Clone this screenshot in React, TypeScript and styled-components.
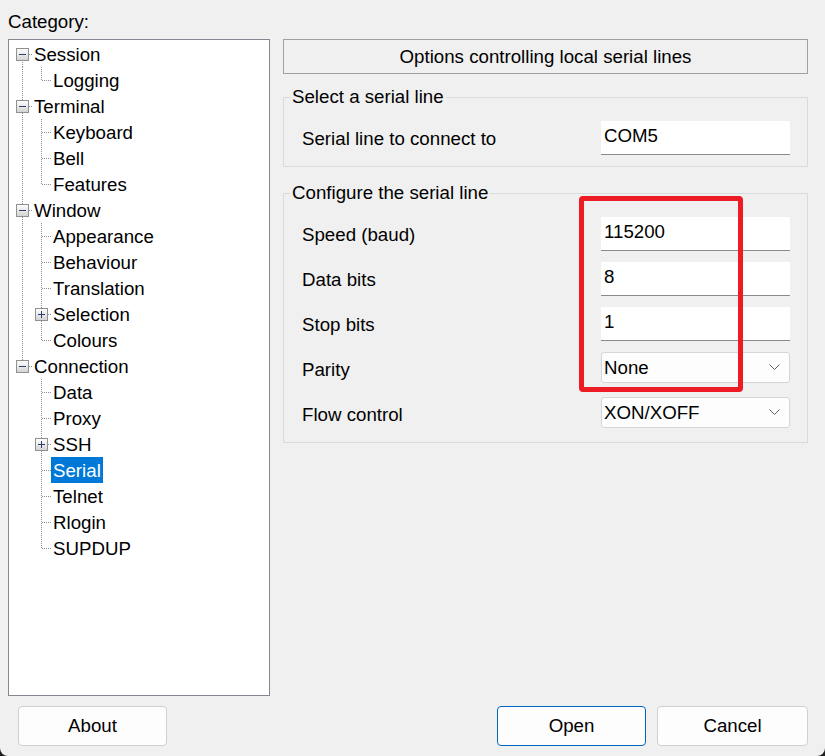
import React, { useId } from 'react';
import styled, { createGlobalStyle } from 'styled-components';

const Global = createGlobalStyle`
  html, body { margin: 0; padding: 0; background: #1f1f1f; }
  body { font-family: "Liberation Sans", Arial, sans-serif; }
`;

const Dialog = styled.div`
  position: relative;
  width: 825px;
  height: 756px;
  box-sizing: border-box;
  background: #f0f0f0;
  border-radius: 0 0 8px 8px;
  padding: 11px 17px 0 8px;
  display: flex;
  flex-direction: column;
  font-family: "Liberation Sans", Arial, sans-serif;
  font-size: 18.7px;
  color: #000;
`;

const CategoryLabel = styled.div`
  height: 21px;
  line-height: 21px;
  margin-bottom: 7px;
`;

const Main = styled.div`
  display: flex;
  gap: 13px;
  height: 657px;
`;

const TreeBox = styled.div`
  width: 262px;
  height: 657px;
  box-sizing: border-box;
  border: 1px solid #828790;
  background: #fff;
  padding: 1px 0 0 4px;
  display: flex;
  flex-direction: column;
`;

const TreeRow = styled.div`
  display: flex;
  height: 26px;
  align-items: stretch;
`;

const GuideSvg = styled.svg`
  display: block;
  flex: 0 0 19px;
  width: 19px;
  height: 26px;
`;

const NodeLabel = styled.span<{ $selected?: boolean }>`
  padding: 1px 2px 0;
  box-sizing: border-box;
  height: 26px;
  line-height: 25px;
  white-space: nowrap;
  background: ${(p) => (p.$selected ? '#0078d7' : 'transparent')};
  color: ${(p) => (p.$selected ? '#fff' : '#000')};
`;

const RightCol = styled.div`
  flex: 1;
  display: flex;
  flex-direction: column;
`;

const Header = styled.div`
  height: 35px;
  box-sizing: border-box;
  border: 1px solid #a0a0a0;
  padding-top: 1px;
  display: flex;
  align-items: center;
  justify-content: center;
`;

const Group = styled.fieldset<{ $gap: number }>`
  margin: ${(p) => p.$gap}px 0 0 0;
  padding: 0;
  border: 1px solid #dadada;
  min-width: 0;
`;

const Legend = styled.legend`
  margin-left: 6px;
  padding: 0 2px;
  line-height: 22px;
  height: 22px;
`;

const GroupBody = styled.div`
  padding: 13px 17px 11px 18px;
  display: flex;
  flex-direction: column;
  gap: 11px;
`;

const FieldRow = styled.div`
  display: grid;
  grid-template-columns: 1fr 189px;
  height: 34px;
  align-items: center;
`;

const FieldLabel = styled.span`
  padding-top: 1px;
`;

const TextBox = styled.div`
  height: 34px;
  box-sizing: border-box;
  background: #fff;
  border-bottom: 1px solid #8a8a8a;
  padding: 4px 4px 0 3px;
  line-height: 21px;
`;

const Combo = styled.div`
  align-self: start;
  height: 31px;
  box-sizing: border-box;
  background: #fdfdfd;
  border: 1px solid #d6d6d6;
  border-radius: 3px;
  display: flex;
  align-items: center;
  justify-content: space-between;
  padding: 0 9px 0 2px;
  line-height: 21px;
`;

const Footer = styled.div`
  margin-top: 10px;
  height: 40px;
  display: flex;
  padding-left: 10px;
  gap: 11px;
`;

const Button = styled.div<{ $w: number; $default?: boolean }>`
  width: ${(p) => p.$w}px;
  height: 40px;
  box-sizing: border-box;
  background: #fdfdfd;
  border: 1px solid ${(p) => (p.$default ? '#0067c0' : '#d0d0d0')};
  border-radius: 4px;
  display: flex;
  align-items: center;
  justify-content: center;
`;

const Spacer = styled.div`
  flex: 1;
`;

const Annotation = styled.div`
  position: absolute;
  left: 579px;
  top: 196px;
  width: 164px;
  height: 196px;
  box-sizing: border-box;
  border: 5px solid #ed1c24;
  border-radius: 4px;
  pointer-events: none;
`;

type GuideProps = { up?: boolean; down?: boolean; right?: boolean; box?: 'plus' | 'minus' };

const Guide: React.FC<GuideProps> = ({ up, down, right, box }) => {
  const id = useId().replace(/:/g, '');
  const dot = { stroke: '#8e8e8e', strokeWidth: 1, strokeDasharray: '1 1', shapeRendering: 'crispEdges' as const };
  const y1 = up ? 0 : 13;
  const y2 = down ? 26 : 14;
  return (
    <GuideSvg viewBox="0 0 19 26">
      {(up || down) && <line x1={9.5} y1={y1} x2={9.5} y2={y2} {...dot} />}
      {right && <line x1={10} y1={13.5} x2={19} y2={13.5} {...dot} />}
      {box && (
        <>
          <defs>
            <linearGradient id={id} x1="0" y1="0" x2="0" y2="1">
              <stop offset="0" stopColor="#ffffff" />
              <stop offset="1" stopColor="#d2d2d2" />
            </linearGradient>
          </defs>
          <rect x={3.5} y={7.5} width={12} height={12} fill={`url(#${id})`} stroke="#919191" shapeRendering="crispEdges" />
          <line x1={6} y1={13.5} x2={13} y2={13.5} stroke="#2c3f6e" shapeRendering="crispEdges" />
          {box === 'plus' && <line x1={9.5} y1={10} x2={9.5} y2={17} stroke="#2c3f6e" shapeRendering="crispEdges" />}
        </>
      )}
    </GuideSvg>
  );
};

type Child = { label: string; plus?: boolean; selected?: boolean };
const tree: { label: string; children: Child[] }[] = [
  { label: 'Session', children: [{ label: 'Logging' }] },
  { label: 'Terminal', children: [{ label: 'Keyboard' }, { label: 'Bell' }, { label: 'Features' }] },
  {
    label: 'Window',
    children: [
      { label: 'Appearance' },
      { label: 'Behaviour' },
      { label: 'Translation' },
      { label: 'Selection', plus: true },
      { label: 'Colours' },
    ],
  },
  {
    label: 'Connection',
    children: [
      { label: 'Data' },
      { label: 'Proxy' },
      { label: 'SSH', plus: true },
      { label: 'Serial', selected: true },
      { label: 'Telnet' },
      { label: 'Rlogin' },
      { label: 'SUPDUP' },
    ],
  },
];

const Chevron = () => (
  <svg width="11" height="7" viewBox="0 0 11 7">
    <polyline points="0.5,0.5 5.5,5.5 10.5,0.5" fill="none" stroke="#606060" strokeWidth="1" />
  </svg>
);

const Tree = () => (
  <TreeBox>
    {tree.map((top, i) => {
      const lastTop = i === tree.length - 1;
      return (
        <React.Fragment key={top.label}>
          <TreeRow>
            <Guide up={i > 0} down={!lastTop} right box="minus" />
            <NodeLabel>{top.label}</NodeLabel>
          </TreeRow>
          {top.children.map((c, j) => (
            <TreeRow key={c.label}>
              <Guide up={!lastTop} down={!lastTop} />
              <Guide up down={j < top.children.length - 1} right box={c.plus ? 'plus' : undefined} />
              <NodeLabel $selected={c.selected}>{c.label}</NodeLabel>
            </TreeRow>
          ))}
        </React.Fragment>
      );
    })}
  </TreeBox>
);

export default function App() {
  return (
    <>
      <Global />
      <Dialog>
        <CategoryLabel>Category:</CategoryLabel>
        <Main>
          <Tree />
          <RightCol>
            <Header>Options controlling local serial lines</Header>
            <Group $gap={12}>
              <Legend>Select a serial line</Legend>
              <GroupBody>
                <FieldRow>
                  <FieldLabel>Serial line to connect to</FieldLabel>
                  <TextBox>COM5</TextBox>
                </FieldRow>
              </GroupBody>
            </Group>
            <Group $gap={15}>
              <Legend>Configure the serial line</Legend>
              <GroupBody>
                <FieldRow>
                  <FieldLabel>Speed (baud)</FieldLabel>
                  <TextBox>115200</TextBox>
                </FieldRow>
                <FieldRow>
                  <FieldLabel>Data bits</FieldLabel>
                  <TextBox>8</TextBox>
                </FieldRow>
                <FieldRow>
                  <FieldLabel>Stop bits</FieldLabel>
                  <TextBox>1</TextBox>
                </FieldRow>
                <FieldRow>
                  <FieldLabel>Parity</FieldLabel>
                  <Combo>
                    <span>None</span>
                    <Chevron />
                  </Combo>
                </FieldRow>
                <FieldRow>
                  <FieldLabel>Flow control</FieldLabel>
                  <Combo>
                    <span>XON/XOFF</span>
                    <Chevron />
                  </Combo>
                </FieldRow>
              </GroupBody>
            </Group>
          </RightCol>
        </Main>
        <Footer>
          <Button $w={149}>About</Button>
          <Spacer />
          <Button $w={149} $default>Open</Button>
          <Button $w={151}>Cancel</Button>
        </Footer>
        <Annotation />
      </Dialog>
    </>
  );
}
